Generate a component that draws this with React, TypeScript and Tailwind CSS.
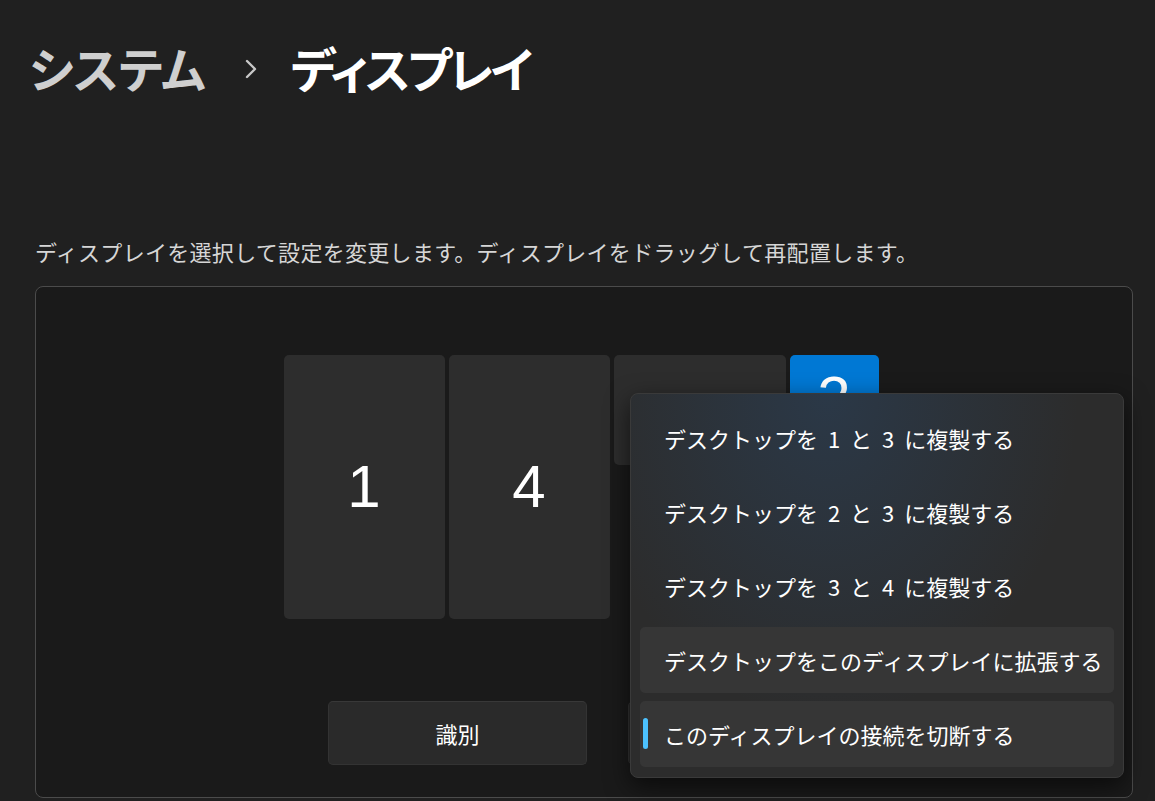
import React from "react";

const jp = "font-['Noto_Sans_CJK_JP','Noto_Sans',sans-serif]";

const menuItems = [
  { label: "デスクトップを 1 と 3 に複製する", active: false, current: false },
  { label: "デスクトップを 2 と 3 に複製する", active: false, current: false },
  { label: "デスクトップを 3 と 4 に複製する", active: false, current: false },
  { label: "デスクトップをこのディスプレイに拡張する", active: true, current: false },
  { label: "このディスプレイの接続を切断する", active: true, current: true },
];

function Chevron() {
  return (
    <svg width="14" height="22" viewBox="0 0 14 22" className="ml-[38px] mr-[33px] mt-[4px]">
      <path d="M3 3 L11 11 L3 19" fill="none" stroke="#c8c8c8" strokeWidth="2.4" strokeLinecap="round" strokeLinejoin="round" />
    </svg>
  );
}

function Tile({ n, w, h, blue }: { n: string; w: string; h: string; blue?: boolean }) {
  return (
    <div
      className={`${w} ${h} rounded-[5px] flex items-center justify-center text-white ${
        blue ? "bg-[#0078d4]" : "bg-[#2d2d2d]"
      }`}
    >
      <span className="font-['Liberation_Sans',sans-serif] text-[60px] leading-none">{n}</span>
    </div>
  );
}

export default function App() {
  return (
    <div className={`relative w-[1155px] h-[801px] overflow-hidden bg-[#202020] ${jp}`}>
      <div className="pl-[35px] pr-[22px]">
        <h1 className="mt-[44px] -ml-[6px] flex items-center h-[46px] text-[48px] font-bold leading-none [font-feature-settings:'palt']">
          <span className="text-[#cfcfcf]">システム</span>
          <Chevron />
          <span className="text-white tracking-[-3px]">ディスプレイ</span>
        </h1>

        <p className="mt-[146px] text-[22px] leading-[30px] text-[#d6d6d6] tracking-[0.3px]">
          ディスプレイを選択して設定を変更します。ディスプレイをドラッグして再配置します。
        </p>

        <div className="mt-[20px] h-[512px] w-[1098px] rounded-lg border border-[#4b4b4b] bg-[#1a1a1a] flex flex-col items-center pt-[68px] pr-[6px]">
          <div className="flex items-start gap-[4px]">
            <Tile n="1" w="w-[161px]" h="h-[264px]" />
            <Tile n="4" w="w-[161px]" h="h-[264px]" />
            <div className="w-[172px] h-[110px] rounded-[5px] bg-[#2d2d2d]" />
            <Tile n="2" w="w-[89px]" h="h-[86px]" blue />
          </div>

          <div className="mt-[82px] flex gap-[41px] ml-[6px]">
            <button className="w-[259px] h-[64px] rounded-[5px] bg-[#2a2a2a] border border-[#333333] border-t-[#383838] text-white text-[22px]">
              識別
            </button>
            <button className="w-[212px] h-[64px] rounded-[5px] bg-[#2a2a2a] border border-[#333333]" />
          </div>
        </div>
      </div>

      {/* flyout menu */}
      <div className="absolute left-[630px] top-[393px] w-[494px] h-[385px] rounded-lg border border-[#3a3a3a] bg-[#2c2c2c] shadow-[0_8px_24px_rgba(0,0,0,0.6)] overflow-hidden">
        <div className="absolute inset-0 bg-[radial-gradient(ellipse_at_40%_0%,rgba(40,85,135,0.3),transparent_60%)]" />
        <div className="relative flex flex-col gap-[8px] px-[9px] pt-[11px]">
          {menuItems.map((item) => (
            <div
              key={item.label}
              className={`relative h-[66px] rounded-[5px] flex items-center pl-[24px] text-white text-[22px] [word-spacing:5px] ${
                item.active ? "bg-[#363636]" : ""
              }`}
            >
              {item.current && (
                <span className="absolute left-[3px] top-[17px] w-[5px] h-[31px] rounded-full bg-[#4cc2ff]" />
              )}
              {item.label}
            </div>
          ))}
        </div>
      </div>
    </div>
  );
}
